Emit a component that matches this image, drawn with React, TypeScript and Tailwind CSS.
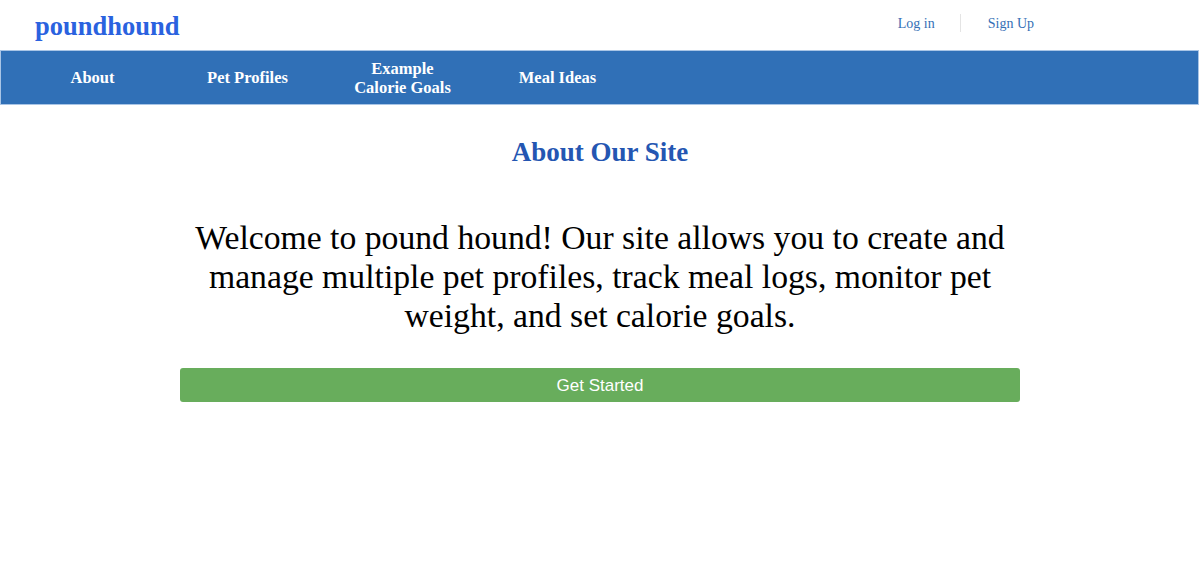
import { ReactNode } from "react";

const serif = "font-['Liberation_Serif','Times_New_Roman',serif]";

function NavItem({ children }: { children: ReactNode }) {
  return (
    <a className="w-[155px] text-center text-[16.5px] leading-[19px] font-bold text-white cursor-pointer">
      {children}
    </a>
  );
}

export default function App() {
  return (
    <div className={`${serif} bg-white min-h-[576px] w-[1200px]`}>
      {/* Header */}
      <header className="h-[50px] flex items-center justify-between pl-[35px] pr-[166px]">
        <h1 className="text-[26.5px] leading-none font-bold text-[#2a62df] mt-[3px]">poundhound</h1>
        <div className="flex items-center text-[14px] text-[#3570b6] -mt-[4px]">
          <a className="cursor-pointer">Log in</a>
          <span className="ml-[25px] mr-[27px] w-px h-[18px] bg-[#e4e4e4]" />
          <a className="cursor-pointer">Sign Up</a>
        </div>
      </header>

      {/* Nav */}
      <nav className="w-[1199px] h-[55px] bg-[#3070b7] border border-[#a9c5e6] flex items-center pl-[14px]">
        <NavItem>About</NavItem>
        <NavItem>Pet Profiles</NavItem>
        <NavItem>
          Example
          <br />
          Calorie Goals
        </NavItem>
        <NavItem>Meal Ideas</NavItem>
      </nav>

      {/* About */}
      <main className="flex flex-col items-center">
        <h2 className="mt-[32px] text-[27px] leading-[30px] font-bold text-[#2456b2]">About Our Site</h2>
        <div className="w-[840px] mt-[51px] flex flex-col items-center">
          <p className="text-[33.7px] leading-[39px] text-black text-center">
            Welcome to pound hound! Our site allows you to create and manage multiple pet profiles, track meal logs,
            monitor pet weight, and set calorie goals.
          </p>
          <button className="mt-[33px] w-full h-[34px] rounded-[3px] bg-[#68ad5c] text-white text-[17px] pt-[2px] font-['Liberation_Sans',Arial,sans-serif]">
            Get Started
          </button>
        </div>
      </main>
    </div>
  );
}
